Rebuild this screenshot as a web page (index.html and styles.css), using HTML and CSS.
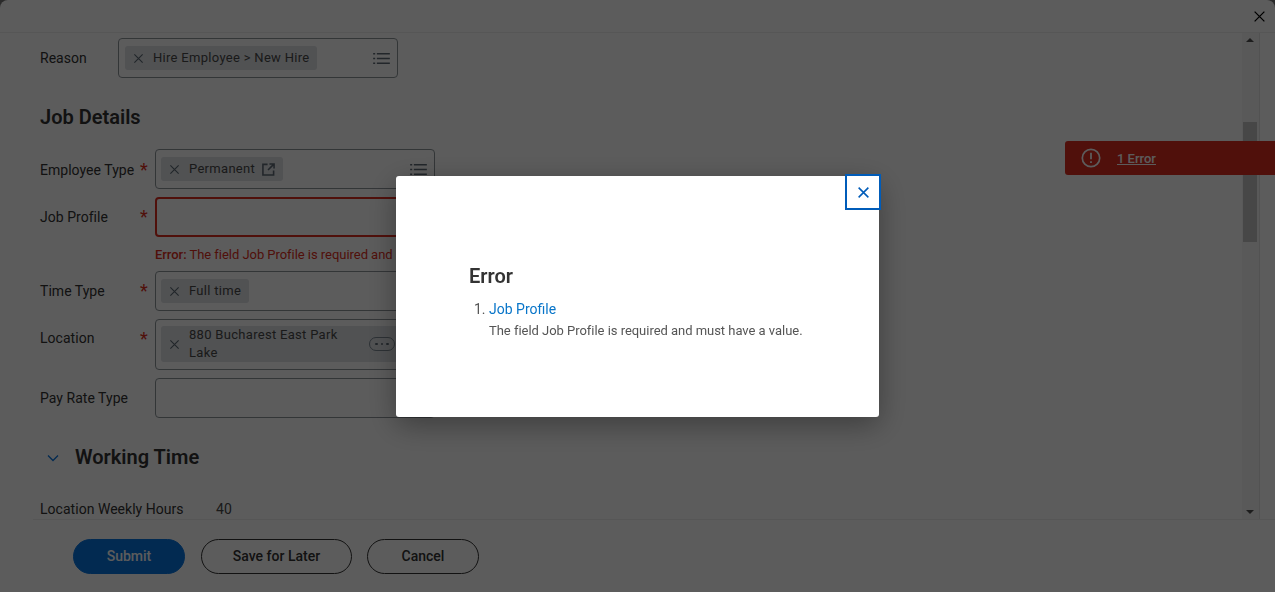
FILE: index.html
```html
<!DOCTYPE html>
<html lang="en">
<head>
<meta charset="utf-8">
<title>Hire - Error</title>
<link rel="stylesheet" href="styles.css">
</head>
<body>
<svg class="defs" width="0" height="0" aria-hidden="true">
  <symbol id="i-x" viewBox="0 0 12 12"><path d="M1.5 1.5l9 9M10.5 1.5l-9 9" fill="none" stroke="currentColor"/></symbol>
  <symbol id="i-list" viewBox="0 0 18 14"><path d="M0 1h2.2v1.6H0zM0 6.2h2.2v1.6H0zM0 11.4h2.2V13H0zM4 1h14v1.6H4zM4 6.2h14v1.6H4zM4 11.4h14V13H4z" fill="currentColor"/></symbol>
</svg>
<div class="window">
  <header class="topbar">
    <button class="win-close" type="button" aria-label="Close"><svg class="ico-win-close"><use href="#i-x"/></svg></button>
  </header>
  <div class="middle">
    <main class="scroll">
      <div class="row row-reason">
        <span class="label label-short">Reason</span>
        <div class="field">
          <span class="chip"><svg class="chip-x"><use href="#i-x"/></svg><span class="chip-text">Hire Employee &gt; New Hire</span></span>
          <svg class="list-ico"><use href="#i-list"/></svg>
        </div>
      </div>
      <h2 class="section">Job Details</h2>
      <div class="row row-first">
        <span class="label label-low">Employee Type</span><span class="star star-low">*</span>
        <div class="field field-compact">
          <span class="chip"><svg class="chip-x"><use href="#i-x"/></svg><span class="chip-text">Permanent</span>
            <svg class="ext-ico" viewBox="0 0 14 14"><path d="M6 1.5H1v11.5h11.500V8M8 1h5v5M13 1L6.500 7.500" fill="none" stroke="currentColor" stroke-width="1.700"/></svg></span>
          <svg class="list-ico"><use href="#i-list"/></svg>
        </div>
      </div>
      <div class="row">
        <span class="label">Job Profile</span><span class="star">*</span>
        <div class="field field-error"></div>
      </div>
      <p class="error-msg"><b>Error:</b> The field Job Profile is required and must have a value.</p>
      <div class="row row-after-error">
        <span class="label">Time Type</span><span class="star">*</span>
        <div class="field field-compact">
          <span class="chip"><svg class="chip-x"><use href="#i-x"/></svg><span class="chip-text">Full time</span></span>
        </div>
      </div>
      <div class="row">
        <span class="label label-high">Location</span><span class="star">*</span>
        <div class="field field-tall field-compact">
          <span class="chip chip-wide"><svg class="chip-x"><use href="#i-x"/></svg><span class="chip-text chip-wrap">880 Bucharest East Park Lake</span>
            <span class="more"><i></i><i></i><i></i></span></span>
        </div>
      </div>
      <div class="row">
        <span class="label">Pay Rate Type</span>
        <div class="field field-nostar"></div>
      </div>
      <div class="section section-collapse">
        <svg class="chev" viewBox="0 0 12 8"><path d="M1 1.500l5 5 5-5" fill="none" stroke="currentColor" stroke-width="1.300"/></svg>
        <h2 class="section-title">Working Time</h2>
      </div>
      <div class="hours"><span class="hours-label">Location Weekly Hours</span><span class="hours-value">40</span></div>
    </main>
    <div class="scrollbar">
      <span class="arrow arrow-up"></span>
      <span class="thumb"></span>
      <span class="arrow arrow-down"></span>
    </div>
  </div>
  <footer class="footer">
    <button class="btn btn-primary" type="button">Submit</button>
    <button class="btn btn-save" type="button">Save for Later</button>
    <button class="btn btn-cancel" type="button">Cancel</button>
  </footer>
  <div class="error-banner">
    <svg class="alert-ico" viewBox="0 0 20 20"><circle cx="10" cy="10" r="8.700" fill="none" stroke="currentColor" stroke-width="1.700"/><path d="M9.100 4.800h1.800v6.400H9.100zM9.100 13.200h1.800V15H9.100z" fill="currentColor"/></svg>
    <a class="banner-link" href="#">1 Error</a>
  </div>
</div>
<div class="overlay"></div>
<section class="modal">
  <button class="modal-close" type="button" aria-label="Close"><svg class="ico-modal-close"><use href="#i-x"/></svg></button>
  <h2 class="modal-title">Error</h2>
  <ol class="modal-list">
    <li><a class="modal-link" href="#">Job Profile</a>
      <p class="modal-text">The field Job Profile is required and must have a value.</p></li>
  </ol>
</section>
</body>
</html>
```
FILE: styles.css
```css
* { box-sizing: border-box; }
html, body { height: 100%; }
body {
  margin: 0;
  background: #777;
  color: #333;
  font-family: Roboto, "Liberation Sans", sans-serif;
  overflow: hidden;
}
.defs { position: absolute; }
.window {
  position: relative;
  height: 592px;
  display: flex;
  flex-direction: column;
  background: #fff;
  border-radius: 8px 8px 0 0;
  overflow: hidden;
}
.topbar {
  height: 33px;
  flex: none;
  display: flex;
  justify-content: flex-end;
  align-items: flex-start;
  border-bottom: 1px solid #eee;
}
.win-close {
  width: 32px;
  height: 32px;
  padding: 0;
  border: 0;
  background: none;
  display: flex;
  align-items: center;
  justify-content: center;
  color: #000;
}
.ico-win-close { width: 13px; height: 13px; stroke-width: 1.2; }
.middle {
  flex: none;
  height: 486px;
  display: flex;
}
.scroll {
  flex: 1;
  min-width: 0;
  overflow: hidden;
  padding: 5px 0 0 40px;
}
.scrollbar {
  width: 18px;
  margin-right: 15px;
  flex: none;
  display: flex;
  flex-direction: column;
  align-items: center;
  background: #f6f6f6;
  border-right: 1px solid #e4e4e4;
  padding-right: 1px;
}
.arrow { width: 0; height: 0; border-left: 4px solid transparent; border-right: 4px solid transparent; }
.arrow-up { margin-top: 5px; border-bottom: 4px solid #505050; }
.thumb { width: 14px; height: 120px; margin-top: 80px; background: #c6c6c6; }
.arrow-down { margin-top: auto; margin-bottom: 5px; border-top: 4px solid #505050; }
.row { display: flex; align-items: flex-start; margin-top: 8px; }
.row-reason { margin-top: 0; }
.row-first { margin-top: 20px; }
.row-after-error { margin-top: 8px; }
.label { width: 100px; padding-top: 10px; font-size: 14px; line-height: 20px; letter-spacing: .03px; flex: none; }
.label-short { width: 78px; }
.label-low { padding-top: 11px; }
.label-high { padding-top: 9px; }
.star { width: 15px; flex: none; padding-top: 10px; font-size: 18px; line-height: 20px; color: #de2e21; }
.star-low { padding-top: 11px; }
.field {
  width: 280px;
  height: 40px;
  flex: none;
  display: flex;
  align-items: flex-start;
  padding: 7px 7px 0 6px;
  border: 1px solid #8e959a;
  border-radius: 4px;
  background: #fff;
}
.field-compact { padding-left: 5px; }
.field-error { border: 2px solid #de2e21; }
.field-tall { height: 51px; padding-top: 6px; }
.field-nostar { margin-left: 15px; }
.chip {
  height: 24px;
  display: inline-flex;
  align-items: center;
  padding: 0 8px;
  background: #dfe2e6;
  border-radius: 3px;
  color: #4a4a4a;
}
.chip-wide { flex: 1; height: 36px; margin-right: -7px; }
.chip-x { width: 11px; height: 11px; flex: none; margin-right: 9px; color: #5e6a75; stroke-width: 1.2; }
.chip-text { font-size: 13px; line-height: 18px; letter-spacing: .3px; white-space: nowrap; }
.chip-wrap { white-space: normal; width: 165px; }
.ext-ico { width: 13px; height: 13px; margin-left: 7px; color: #5e6a75; }
.list-ico { width: 17px; height: 13px; margin: 6px 0 0 auto; color: #5e6a75; }
.more {
  width: 26px;
  height: 14px;
  margin: 0 0 0 15px;
  display: inline-flex;
  gap: 3px;
  justify-content: center;
  align-items: center;
  border: 1px solid #7e8a94;
  border-radius: 7px;
}
.more i { width: 2.500px; height: 2.500px; border-radius: 50%; background: #5e6a75; }
.section { margin: 27px 0 0; font-size: 20px; line-height: 24px; font-weight: 600; color: #333; }
.error-msg { margin: 10px 0 0 115px; font-size: 13px; line-height: 16px; white-space: nowrap; color: #de2e21; letter-spacing: -.04px; }
.error-msg b { font-weight: 500; }
.section-collapse { display: flex; align-items: center; margin-left: 7px; }
.section-title { margin: 0 0 0 15px; font: inherit; }
.chev { width: 12px; height: 8px; flex: none; margin-top: 2px; margin-right: 1px; color: #0875e1; }
.hours { margin-top: 30px; display: flex; font-size: 14px; line-height: 20px; letter-spacing: .03px; }
.hours-label { width: 176px; flex: none; }
.hours-value { color: #4a4a4a; }
.footer {
  flex: 1;
  display: flex;
  align-items: flex-start;
  gap: 16px;
  padding: 19px 0 0 40px;
  border-top: 1px solid #eee;
  margin-left: 33px;
}
.btn {
  height: 35px;
  padding: 0 0 2px;
  border: 1px solid #333;
  border-radius: 18px;
  background: #fff;
  color: #333;
  font-family: inherit;
  font-size: 14px;
  font-weight: 500;
  letter-spacing: 0;
}
.btn-primary { width: 112px; background: #0875e1; border-color: #0875e1; color: #fff; }
.btn-save { width: 151px; }
.btn-cancel { width: 112px; margin-left: -1px; }
.error-banner {
  position: absolute;
  left: 1065px;
  top: 141px;
  right: 0;
  height: 34px;
  display: flex;
  align-items: center;
  padding-left: 16px;
  background: #de2e21;
  border-radius: 3px 0 0 3px;
  color: #fff;
}
.alert-ico { width: 20px; height: 20px; flex: none; margin-right: 16px; }
.banner-link { color: #fff; font-size: 13px; font-weight: 500; }
.overlay { position: fixed; inset: 0; background: rgba(0, 0, 0, .64); }
.modal {
  position: fixed;
  left: 396px;
  top: 176px;
  width: 483px;
  height: 241px;
  padding: 88px 0 0 73px;
  background: #fff;
  border-radius: 3px;
  box-shadow: 0 8px 30px rgba(0, 0, 0, .35);
  color: #333;
}
.modal-close {
  position: absolute;
  right: -2px;
  top: -2px;
  width: 36px;
  height: 36px;
  padding: 0;
  border: 2px solid #005cb9;
  background: #fff;
  display: flex;
  align-items: center;
  justify-content: center;
  color: #005cb9;
}
.ico-modal-close { width: 13px; height: 13px; stroke-width: 1.4; }
.modal-title { margin: 0; font-size: 20px; line-height: 24px; font-weight: 600; }
.modal-list { margin: 11px 0 0; padding: 0 0 0 20px; font-size: 14px; line-height: 20px; color: #555; }
.modal-link { color: #0875c9; text-decoration: none; font-size: 14px; }
.modal-text { margin: 3px 0 0; font-size: 13px; line-height: 18px; letter-spacing: -.03px; color: #555; white-space: nowrap; }
```
